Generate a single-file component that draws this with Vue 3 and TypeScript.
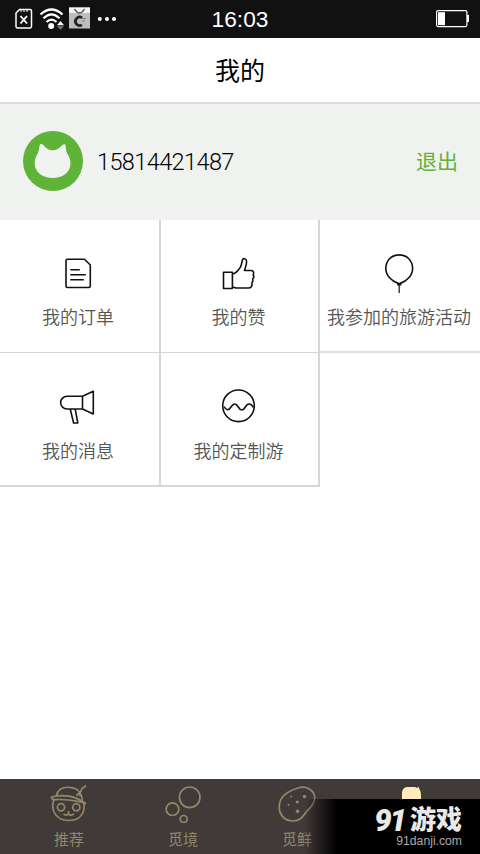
<script setup lang="ts">
interface Entry {
  id: string
  label: string
}

const entries: Entry[] = [
  { id: 'orders', label: '我的订单' },
  { id: 'likes', label: '我的赞' },
  { id: 'events', label: '我参加的旅游活动' },
  { id: 'messages', label: '我的消息' },
  { id: 'custom', label: '我的定制游' },
]
</script>

<template>
  <div class="screen">
    <header class="status">
      <svg class="status-icons" width="120" height="38" viewBox="0 0 120 38">
        <path d="M19.500 9.500H30a1.500 1.500 0 0 1 1.500 1.500V26.500a1.500 1.500 0 0 1-1.500 1.500H17.500a1.500 1.500 0 0 1-1.500-1.500V13z" fill="none" stroke="#fff" stroke-width="1.500" />
        <path d="M21 10v2M24 10v2M27 10v2" stroke="#fff" stroke-width="1" />
        <path d="M20.500 16l6.500 7.500M27 16l-6.500 7.500" stroke="#fff" stroke-width="1.900" />
        <g fill="none" stroke="#fff" stroke-width="2.200">
          <path d="M40.500 14.500Q51.500 4.500 62.500 14.500" />
          <path d="M43.500 18.300Q51.500 10.500 59.500 18.300" />
          <path d="M46.500 22Q51.500 17.200 56.500 22" />
        </g>
        <circle cx="51.200" cy="26" r="3" fill="#fff" />
        <path d="M57 25.300l3.500-4.300 3.500 4.300z" fill="#fff" />
        <path d="M57 26.300l3.500 3.500 3.500-3.500z" fill="#777" />
        <rect x="69" y="7.500" width="21" height="21" fill="#bdbdbd" />
        <rect x="69" y="7.500" width="21" height="5.500" fill="#f4f4f4" />
        <path d="M74.500 9q5 8 10 0" fill="none" stroke="#444" stroke-width="1.300" />
        <path d="M82 17.800a4.200 4.200 0 1 0 0 7" fill="none" stroke="#222" stroke-width="2.700" />
        <path d="M81.500 18.500h4M82 21h3" stroke="#777" stroke-width="1" />
        <g fill="#fff">
          <circle cx="99.800" cy="19" r="2" />
          <circle cx="107" cy="19" r="2" />
          <circle cx="114" cy="19" r="2" />
        </g>
      </svg>
      <span class="clock">16:03</span>
      <svg class="battery" width="34" height="18" viewBox="0 0 34 18">
        <rect x=".600" y=".600" width="30.300" height="16" rx="1.500" fill="none" stroke="#fff" stroke-width="1.200" />
        <rect x="2" y="2.200" width="7" height="13" fill="#fff" />
        <rect x="31" y="5" width="2" height="7" fill="#fff" />
      </svg>
    </header>

    <h1 class="title">我的</h1>

    <section class="profile">
      <svg width="60" height="60" viewBox="0 0 60 60">
        <circle cx="30" cy="30" r="30" fill="#5fb336" />
        <path d="M16.500 15C17 12.500 19 12.500 20.500 14.200C23.500 17.500 26 19.300 29.500 19.300C33.500 19.300 36 17.500 39 14.500C41 12.600 42.500 13 42.700 15C42.900 18 43 20.500 44.500 23C46.500 26 47.700 29 47.500 33C47 42 39 47 29.700 47C20 47 12 41.500 11.700 33C11.600 29 12.500 26 14.500 22.700C16 20.300 16 17.500 16.500 15Z" fill="#f0f2ef" />
      </svg>
      <span class="phone">15814421487</span>
      <a class="logout">退出</a>
    </section>

    <main class="grid">
      <div v-for="entry in entries" :key="entry.id" class="cell" :class="entry.id">
        <svg class="icon" width="40" height="40" viewBox="0 0 40 40">
          <g v-if="entry.id === 'orders'">
            <path d="M9.500 6.200H26.500L32.300 12V33a1.500 1.500 0 0 1-1.500 1.500H9.500A1.500 1.500 0 0 1 8 33V7.700a1.500 1.500 0 0 1 1.500-1.500z" />
            <path d="M12.300 16.700h9.500M12.300 21.700h15.500M12.300 26.700h13.500" />
          </g>
          <g v-else-if="entry.id === 'likes'">
            <path d="M4.500 19.300h8.900v16.200H4.500z" />
            <path d="M13.400 21C17.700 20.500 19.200 17 21.200 14.500C22.700 12.500 22.700 9.500 23.200 7.500C24 4.700 27.300 5.300 27.600 8C27.800 11 26.700 13.500 25.500 17.500H32.200C34.700 17.700 35.200 20 34.200 21.700C35.200 23.200 34.700 25 33.700 26C34.400 27.700 33.700 29 32.900 30C33.700 32.500 32.200 35 29.400 35H17.700C15.700 35 15.200 34 13.400 34" />
          </g>
          <g v-else-if="entry.id === 'events'">
            <path d="M19.500 30.500C12.500 28 6.800 22.500 6.800 15.500C6.800 7.500 12.400 1.900 20.200 1.900S33.600 7.500 33.600 15.500C33.600 22.500 27.900 28 20.900 30.500Z" />
            <path d="M18.300 29.500l.700 2.300h2.500l.700-2.300" />
            <path class="string" d="M20.200 31v9" />
          </g>
          <g v-else-if="entry.id === 'messages'">
            <path d="M24.500 10.200H9A6.300 6.300 0 0 0 9 23h15.500M24.500 10.200V23L35.300 28V5.300zM12.300 23.200L15.600 37h4.200L17.200 23.200" />
          </g>
          <g v-else>
            <circle cx="19.500" cy="19.800" r="15.800" />
            <path d="M5 20.500C7 24.500 9.500 25 12 21C14.500 17 17 17 19.300 21C21.500 25 24 25 26.300 21C28.500 17 32 17 34.300 21.500" />
          </g>
        </svg>
        <span class="label">{{ entry.label }}</span>
      </div>
    </main>

    <nav class="tabs">
      <div class="tab">
        <svg width="40" height="40" viewBox="0 0 40 40">
          <path d="M7.500 12.500C9 5.500 15 4 20 4.300C27 4.500 33 8.500 33.300 17.500" />
          <path d="M2.700 14C13 11 26 12.500 37 20.700C30 17.500 14 16 6 16.700Q1.500 16 2.700 14Z" />
          <path d="M5 16.500Q2.500 23 5 29C8 35.500 13 37.500 20 37.500S31.500 35.500 34 29.500Q36 24 34.500 19.500" />
          <circle cx="12" cy="24.300" r="3.600" /><circle cx="27.300" cy="24.300" r="3.600" />
          <path d="M14.500 31q4 2.500 5-.500q1 3 5.500.500M19.500 28v2.500" />
          <path d="M27.500 12.500L31.500 9L33 5.500L37 2.700M31 13.500v-4" />
        </svg>
        <span>推荐</span>
      </div>
      <div class="tab">
        <svg width="40" height="40" viewBox="0 0 40 40">
          <circle cx="26.700" cy="14.300" r="10.300" />
          <circle cx="9.500" cy="26.200" r="6.300" />
          <circle cx="20.700" cy="36" r="3.500" />
        </svg>
        <span>觅境</span>
      </div>
      <div class="tab">
        <svg width="40" height="40" viewBox="0 0 40 40">
          <path d="M22 4.800C28 2.800 37 6 37.700 14C38 20 34 24 30 28C26 33 24 38 16 38C7 38 1.500 31 2.300 22C3 15 9 8.500 22 4.800Z" />
          <g class="spots">
            <circle cx="27.500" cy="13.500" r="1.700" /><circle cx="20.300" cy="19" r="1.600" />
            <circle cx="20.500" cy="28.300" r="1.800" /><circle cx="14" cy="13.500" r=".900" /><circle cx="11.500" cy="21.700" r="1" />
          </g>
        </svg>
        <span>觅鲜</span>
      </div>
      <div class="tab active">
        <svg width="40" height="40" viewBox="0 0 40 40">
          <path d="M11 30V12Q10.500 4.500 16 4H24L26 5Q27.500 3 28 5Q30 8 30 13V30Z" />
        </svg>
      </div>
      <div class="watermark">
        <div class="brand"><span class="digits">91</span><span class="game">游戏</span></div>
        <div class="site">91danji.com</div>
      </div>
    </nav>
  </div>
</template>

<style>
body {
  margin: 0;
  background: #fff;
}
</style>

<style scoped>
.screen {
  width: 480px;
  height: 854px;
  display: flex;
  flex-direction: column;
  overflow: hidden;
  background: #fff;
  font-family: Roboto, "Noto Sans CJK SC", sans-serif;
}
.status {
  height: 38px;
  flex: none;
  display: grid;
  grid-template-columns: 1fr auto 1fr;
  align-items: center;
  background: #111;
  color: #fff;
}
.status-icons {
  display: block;
}
.clock {
  font: 22.700px/38px "Liberation Sans", sans-serif;
}
.battery {
  justify-self: end;
  margin-right: 10px;
}
.title {
  flex: none;
  box-sizing: border-box;
  height: 66px;
  margin: 0;
  padding-top: 1px;
  border-bottom: 2px solid #dcdedc;
  text-align: center;
  font-size: 25px;
  line-height: 65px;
  font-weight: 400;
  color: #000;
}
.profile {
  flex: none;
  box-sizing: border-box;
  height: 116px;
  padding: 0 22px 2px 23px;
  display: flex;
  align-items: center;
  background: #f0f2ef;
}
.phone {
  margin-left: 14px;
  padding-top: 2px;
  font-size: 23.500px;
  line-height: 30px;
  font-weight: 350;
  letter-spacing: -0.600px;
  color: #000;
}
.logout {
  margin-left: auto;
  padding-top: 2px;
  font-size: 21px;
  line-height: 30px;
  font-weight: 400;
  color: #5fb336;
}
.grid {
  flex: none;
  display: grid;
  grid-template-columns: 161px 159px 160px;
  grid-template-rows: 133px 134px;
}
.cell {
  box-sizing: border-box;
  padding-top: 33px;
  display: flex;
  flex-direction: column;
  align-items: center;
  border-right: 2px solid #d6d6d6;
  border-bottom: 1px solid #d6d6d6;
}
.orders,
.messages {
  padding-right: 3px;
}
.likes,
.custom {
  padding-right: 2px;
}
.events {
  padding-right: 2px;
  border-right: 0;
  border-bottom: 2px solid #dedede;
}
.messages,
.custom {
  border-bottom-width: 2px;
}
.icon {
  flex: none;
  fill: none;
  stroke: #111;
  stroke-width: 1.600;
  stroke-linejoin: round;
}
.string {
  stroke-width: 1.200;
}
.label {
  margin-top: 13px;
  font-size: 18px;
  line-height: 24px;
  font-weight: 350;
  white-space: nowrap;
  color: #555;
}
.messages .label,
.custom .label {
  margin-top: 14px;
}
.tabs {
  position: relative;
  height: 75px;
  margin-top: auto;
  display: grid;
  grid-template-columns: repeat(4, 114px);
  padding-left: 12px;
  background: #403a38;
}
.tab {
  padding-top: 4px;
  display: flex;
  flex-direction: column;
  align-items: center;
  font-size: 15px;
  line-height: 20px;
  color: #94886b;
}
.tab svg {
  flex: none;
  margin-bottom: 7px;
  fill: none;
  stroke: #94886b;
  stroke-width: 1.700;
}
.tab .spots {
  fill: #94886b;
  stroke: none;
}
.tab.active svg {
  fill: #ffebbd;
  stroke: none;
}
.watermark {
  position: absolute;
  right: 0;
  bottom: 0;
  width: 175px;
  height: 55px;
  box-sizing: border-box;
  padding: 8px 18px 0 0;
  display: flex;
  flex-direction: column;
  align-items: flex-end;
  background: linear-gradient(90deg, transparent, #000 32px);
  color: #e9e9e9;
}
.brand {
  display: flex;
  align-items: center;
  gap: 5px;
  height: 27px;
  font-weight: 900;
  line-height: 27px;
}
.digits {
  font: italic 900 31px/27px Roboto, sans-serif;
  letter-spacing: -2px;
}
.game {
  font-size: 26px;
}
.site {
  font: 12.200px/15px "Liberation Sans", sans-serif;
  color: #aaa;
}
</style>
